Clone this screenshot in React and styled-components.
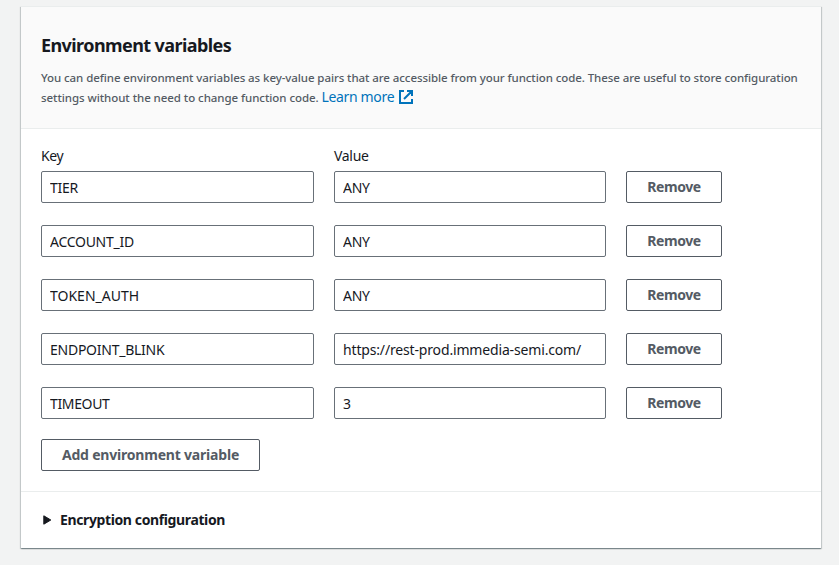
import React from "react";
import styled, { createGlobalStyle } from "styled-components";

const GlobalStyle = createGlobalStyle`
  *, *::before, *::after { box-sizing: border-box; }
  body {
    margin: 0;
    background: #f2f3f3;
    color: #16191f;
    font-family: "Noto Sans", "Open Sans", sans-serif;
    font-size: 14px;
    line-height: 22px;
  }
`;

const Page = styled.main`
  height: 565px;
  padding: 6px 18px 16px 21px;
  overflow: hidden;
`;

const Panel = styled.section`
  height: 542px;
  background: #fff;
  border-top: 1px solid #eaeded;
  box-shadow: 0 1px 1px 0 rgba(0, 28, 36, 0.3), 1px 1px 1px 0 rgba(0, 28, 36, 0.15),
    -1px 1px 1px 0 rgba(0, 28, 36, 0.15);
`;

const PanelHeader = styled.header`
  height: 122px;
  padding: 27px 0 0 20px;
  background: #fafafa;
  border-bottom: 1px solid #eaeded;
`;

const Title = styled.h2`
  margin: 0;
  font-size: 18px;
  line-height: 22px;
  font-weight: 700;
  letter-spacing: -0.58px;
`;

const Description = styled.p`
  margin: 12px 0 0;
  color: #545b64;
  font-size: 11.5px;
  font-weight: 500;
  line-height: 20px;
  white-space: nowrap;
`;

const Line = styled.span`
  display: block;
  height: 20px;
  letter-spacing: ${(p) => p.$spacing}px;
`;

const Link = styled.a`
  color: #0073bb;
  font-size: 14px;
  font-weight: 400;
  letter-spacing: -0.35px;
  line-height: 18px;
  text-decoration: none;
`;

const LinkIcon = styled.svg`
  width: 14px;
  height: 14px;
  margin-left: 5px;
  vertical-align: -2px;
`;

const PanelBody = styled.div`
  height: 363px;
  padding: 16px 20px 0;
  border-bottom: 1px solid #eaeded;
`;

const Fields = styled.div`
  display: grid;
  grid-template-columns: 273px 272px 96px;
  column-gap: 20px;
  row-gap: 22px;
`;

const Labels = styled(Fields)`
  height: 26px;
`;

const Label = styled.span`
  letter-spacing: ${(p) => p.$spacing}px;
`;

const Input = styled.input`
  width: 100%;
  height: 32px;
  padding: 0 8px;
  border: 1px solid #687078;
  border-radius: 2px;
  background: #fff;
  color: #16191f;
  font: inherit;
  letter-spacing: ${(p) => p.$spacing}px;
  outline: none;
`;

const Button = styled.button`
  width: ${(p) => p.$width}px;
  height: 32px;
  padding: 0 0 1px;
  border: 1px solid #545b64;
  border-radius: 2px;
  background: #fff;
  color: #545b64;
  font: inherit;
  font-weight: 700;
  letter-spacing: ${(p) => p.$spacing}px;
  white-space: nowrap;
`;

const Actions = styled.div`
  margin-top: 20px;
`;

const Expander = styled.div`
  display: flex;
  align-items: center;
  height: 56px;
  padding-left: 22px;
  font-weight: 700;
  letter-spacing: -0.38px;
`;

const Caret = styled.svg`
  width: 9px;
  height: 10px;
  margin-right: 8px;
`;

const variables = [
  { key: "TIER", value: "ANY", keySpacing: -0.3, valueSpacing: -0.3 },
  { key: "ACCOUNT_ID", value: "ANY", keySpacing: -0.27, valueSpacing: -0.3 },
  { key: "TOKEN_AUTH", value: "ANY", keySpacing: 0, valueSpacing: -0.3 },
  { key: "ENDPOINT_BLINK", value: "https://rest-prod.immedia-semi.com/", keySpacing: -0.25, valueSpacing: -0.16 },
  { key: "TIMEOUT", value: "3", keySpacing: -0.35, valueSpacing: 0 },
];

export default function App() {
  return (
    <>
      <GlobalStyle />
      <Page>
        <Panel>
          <PanelHeader>
            <Title>Environment variables</Title>
            <Description>
              <Line $spacing={-0.08}>
                You can define environment variables as key-value pairs that are accessible from your function code. These are useful to store configuration
              </Line>
              <Line $spacing={-0.06}>
                settings without the need to change function code.{" "}
                <Link>
                  Learn more
                  <LinkIcon viewBox="0 0 14 14" fill="none" stroke="currentColor" strokeWidth="2">
                    <path d="M5 1H1v12h12V9M8 1h5v5M13 1L5 9" />
                  </LinkIcon>
                </Link>
              </Line>
            </Description>
          </PanelHeader>
          <PanelBody>
            <Labels>
              <Label $spacing={-0.4}>Key</Label>
              <Label $spacing={-0.3}>Value</Label>
            </Labels>
            <Fields>
              {variables.map((v) => (
                <React.Fragment key={v.key}>
                  <Input defaultValue={v.key} $spacing={v.keySpacing} aria-label="Key" />
                  <Input defaultValue={v.value} $spacing={v.valueSpacing} aria-label="Value" />
                  <Button $width={96} $spacing={-0.4}>Remove</Button>
                </React.Fragment>
              ))}
            </Fields>
            <Actions>
              <Button $width={219} $spacing={-0.2}>Add environment variable</Button>
            </Actions>
          </PanelBody>
          <Expander>
            <Caret viewBox="0 0 9 10" fill="currentColor" stroke="currentColor" strokeWidth="1" strokeLinejoin="round">
              <path d="M0.8 0.8L7.8 5L0.8 9.2Z" />
            </Caret>
            Encryption configuration
          </Expander>
        </Panel>
      </Page>
    </>
  );
}
